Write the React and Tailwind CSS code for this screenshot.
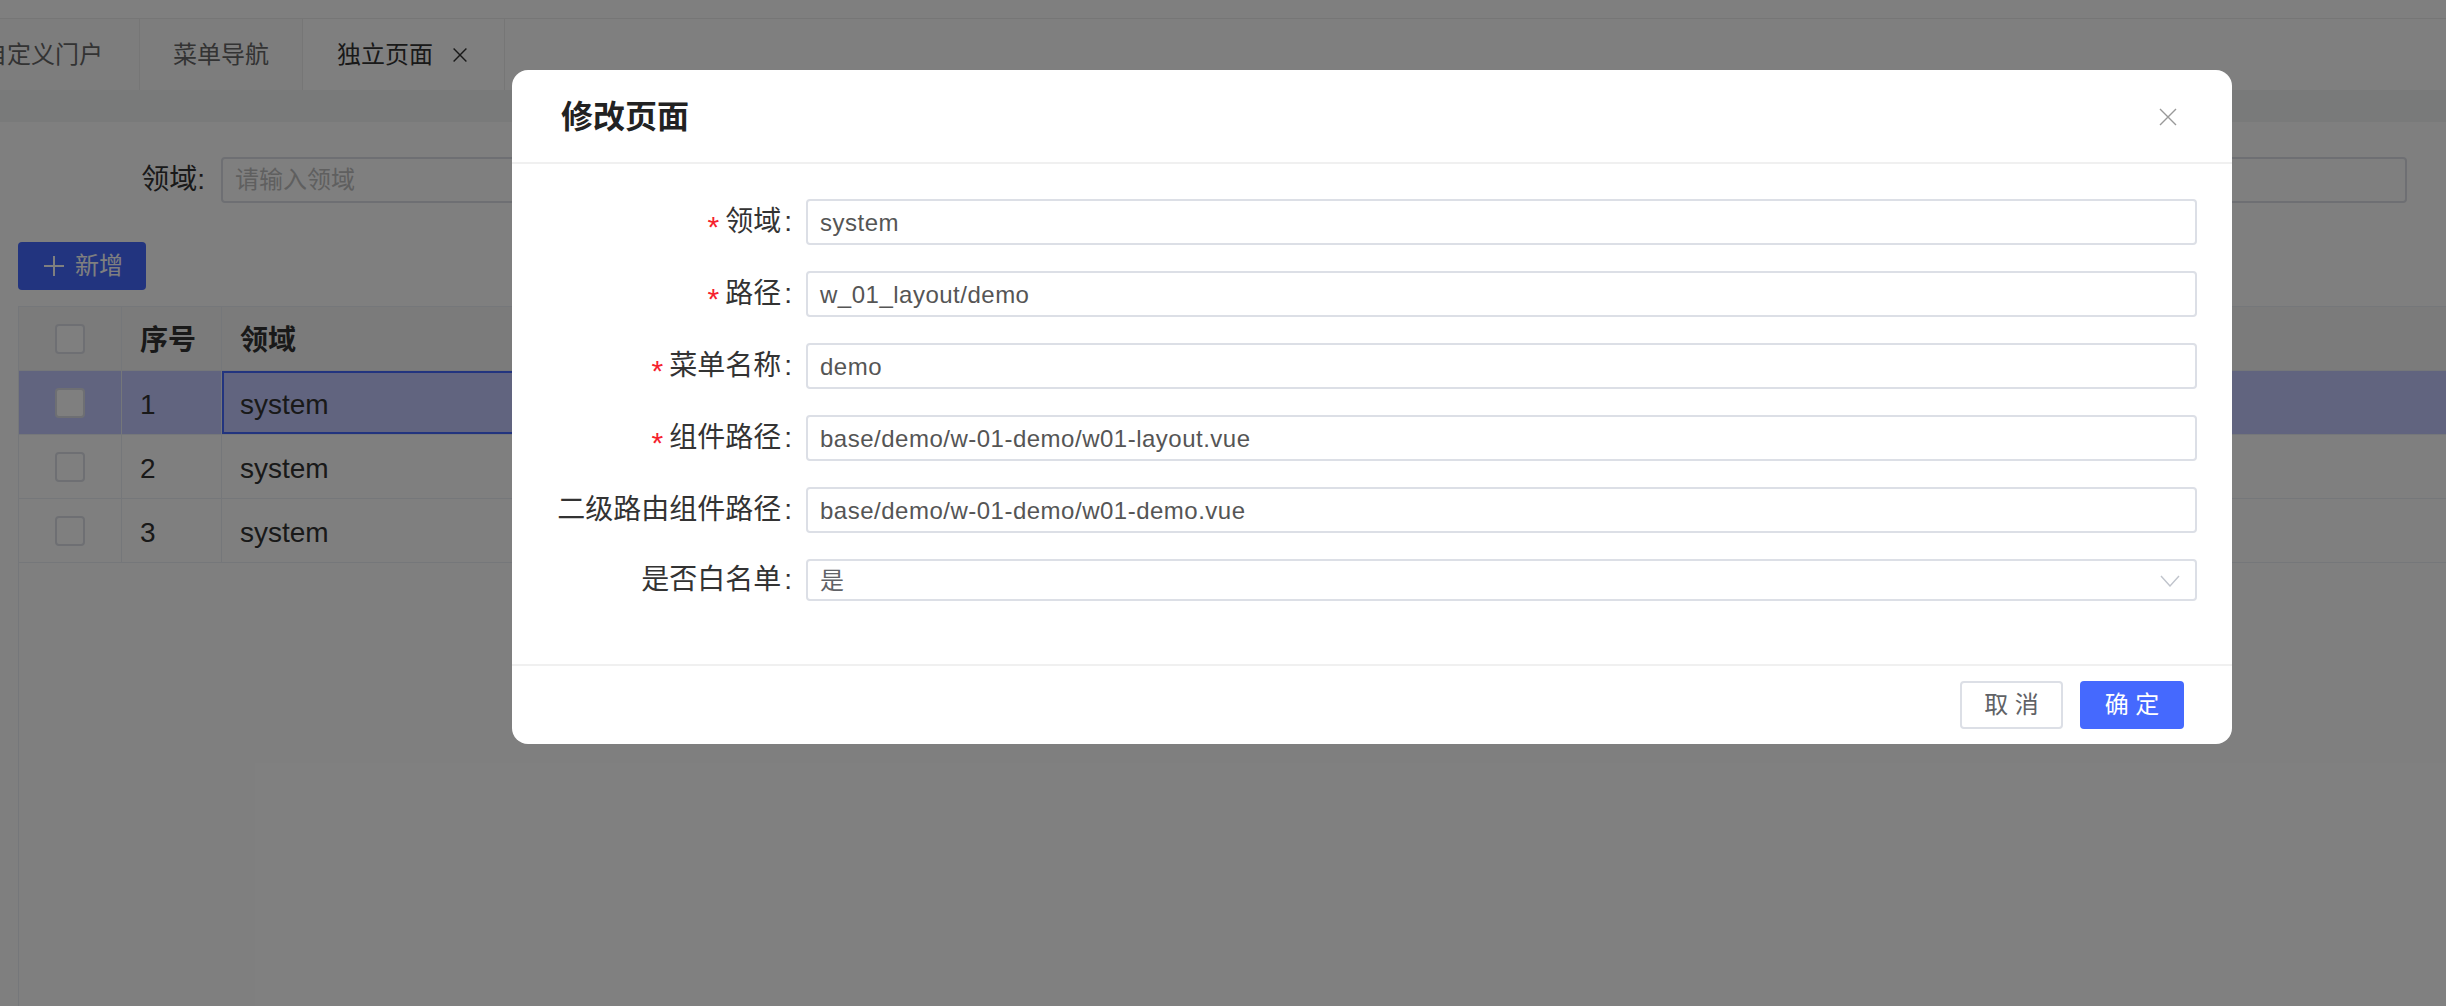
import React from 'react';

const rows = [
  { no: 1, domain: 'system', path: 'w_01_layout/demo', menu: 'demo', active: true },
  { no: 2, domain: 'system', path: 'w_01_layout/menu', menu: 'menu' },
  { no: 3, domain: 'system', path: 'w_01_layout/portal', menu: 'portal' },
];

const fields = [
  { label: '领域', value: 'system', required: true },
  { label: '路径', value: 'w_01_layout/demo', required: true },
  { label: '菜单名称', value: 'demo', required: true },
  { label: '组件路径', value: 'base/demo/w-01-demo/w01-layout.vue', required: true },
  { label: '二级路由组件路径', value: 'base/demo/w-01-demo/w01-demo.vue' },
];

const Checkbox = () => (
  <span className="block w-[30px] h-[30px] rounded-[4px] border-2 border-[#dcdfe6] bg-white" />
);

const CloseIcon = ({ size, color, width = 1.5 }) => (
  <svg width={size} height={size} viewBox="0 0 20 20" fill="none" stroke={color} strokeWidth={width}>
    <path d="M2 2 L18 18 M18 2 L2 18" />
  </svg>
);

const FormLabel = ({ label, required }) => (
  <div className="w-[236px] shrink-0 mr-[14px] flex items-center justify-end text-[28px] text-[#333] leading-none">
    {required && <span className="text-[#f5222d] text-[30px] mr-[6px] mt-[10px]">*</span>}
    <span>{label}</span>
    <span className="ml-[3px]">:</span>
  </div>
);

export default function App() {
  return (
    <div className="relative w-full h-[1006px] overflow-hidden bg-white font-[family-name:'Liberation_Sans','Noto_Sans_CJK_SC',sans-serif]">
      {/* page underneath */}
      <div className="flex flex-col h-full">
        <div className="h-[19px] shrink-0 border-b border-[#ececec]" />

        {/* tabs */}
        <div className="h-[71px] shrink-0 flex text-[24px]">
          <div className="-ml-[17px] pr-[36px] flex items-center bg-[#fafafa] border-r border-[#ececec] text-[#666]">
            自定义门户
          </div>
          <div className="px-[33px] flex items-center bg-[#fafafa] border-r border-[#ececec] text-[#666]">
            菜单导航
          </div>
          <div className="pl-[34px] pr-[36px] flex items-center gap-[19px] border-r border-[#ececec] text-[#333]">
            <span>独立页面</span>
            <CloseIcon size={16} color="#333" width={1.8} />
          </div>
        </div>
        <div className="h-[32px] shrink-0 bg-[#f3f4f5]" />

        {/* search */}
        <div className="mt-[35px] flex items-center mr-[39px]">
          <div className="w-[205px] text-right text-[28px] text-[#333]">领域:</div>
          <div className="ml-[16px] flex-1 h-[46px] rounded-[4px] border-2 border-[#dcdfe6] flex items-center pl-[12px] text-[24px] text-[#bfbfbf]">
            请输入领域
          </div>
        </div>

        <div className="mt-[39px] ml-[18px]">
          <button className="w-[128px] h-[48px] rounded-[4px] bg-[#4468fe] text-white text-[24px] flex items-center pl-[26px] gap-[11px]">
            <svg width="20" height="20" viewBox="0 0 20 20" stroke="white" strokeWidth="2">
              <path d="M10 0 V20 M0 10 H20" />
            </svg>
            新增
          </button>
        </div>

        {/* table */}
        <div className="mt-[16px] ml-[18px] flex-1 border-l border-[#ebeef5] text-[28px] text-[#333] overflow-hidden">
          <div className="flex h-[65px] bg-[#f6f6f6] border-y border-[#ebeef5] font-bold">
            <div className="w-[103px] shrink-0 flex items-center justify-center border-r border-[#ebeef5]">
              <Checkbox />
            </div>
            <div className="w-[100px] shrink-0 flex items-center pl-[18px] pt-[4px] border-r border-[#ebeef5]">序号</div>
            <div className="w-[880px] shrink-0 flex items-center pl-[18px] pt-[4px] border-r border-[#ebeef5]">领域</div>
            <div className="w-[700px] shrink-0 flex items-center pl-[18px] pt-[4px] border-r border-[#ebeef5]">路径</div>
            <div className="flex-1 flex items-center pl-[18px] pt-[4px]">菜单名称</div>
          </div>
          {rows.map((r) => (
            <div
              key={r.no}
              className={`flex h-[64px] border-b border-[#ebeef5] ${r.active ? 'bg-[#c2c9ff]' : 'bg-white'}`}
            >
              <div className="w-[103px] shrink-0 flex items-center justify-center border-r border-[#ebeef5]">
                <Checkbox />
              </div>
              <div className="w-[100px] shrink-0 flex items-center pl-[18px] pt-[4px] border-r border-[#ebeef5]">{r.no}</div>
              <div
                className={`w-[880px] shrink-0 flex items-center pt-[4px] ${
                  r.active ? 'border-2 border-[#4468fe] pl-[16px]' : 'pl-[18px] border-r border-[#ebeef5]'
                }`}
              >
                {r.domain}
              </div>
              <div className="w-[700px] shrink-0 flex items-center pl-[18px] pt-[4px] border-r border-[#ebeef5]">{r.path}</div>
              <div className="flex-1 flex items-center pl-[18px] pt-[4px]">{r.menu}</div>
            </div>
          ))}
        </div>
      </div>

      {/* mask */}
      <div className="absolute inset-0 bg-black/50" />

      {/* edit dialog */}
      <div className="absolute left-[512px] top-[70px] w-[1720px] rounded-[16px] bg-white">
        <div className="h-[94px] flex items-center justify-between pl-[49px] pr-[54px] pt-[2px] border-b-2 border-[#f0f0f0]">
          <h2 className="text-[32px] font-bold text-[#222]">修改页面</h2>
          <CloseIcon size={20} color="#999" width={1.4} />
        </div>

        <div className="pt-[35px] pb-[63px] pl-[44px] pr-[35px] flex flex-col gap-[26px]">
          {fields.map((f) => (
            <div key={f.label} className="flex items-center">
              <FormLabel label={f.label} required={f.required} />
              <div className="flex-1 h-[46px] rounded-[4px] border-2 border-[#dcdfe6] flex items-center pl-[12px] pt-[2px] text-[24px] tracking-[0.5px] text-[#555]">
                {f.value}
              </div>
            </div>
          ))}
          <div className="flex items-center">
            <FormLabel label="是否白名单" />
            <div className="flex-1 h-[42px] rounded-[4px] border-2 border-[#dcdfe6] flex items-center justify-between pl-[12px] pr-[15px] pt-[2px] text-[24px] text-[#606266]">
              <span>是</span>
              <svg width="20" height="12" viewBox="0 0 20 12" fill="none" stroke="#c0c4cc" strokeWidth="1.4">
                <path d="M1 1 L10 11 L19 1" />
              </svg>
            </div>
          </div>
        </div>

        <div className="h-[80px] border-t-2 border-[#f0f0f0] flex items-center justify-end gap-[17px] pr-[48px] text-[24px]">
          <button className="w-[103px] h-[48px] rounded-[4px] border-2 border-[#dcdfe6] bg-white text-[#606266]">
            取 消
          </button>
          <button className="w-[104px] h-[48px] rounded-[4px] bg-[#4569fe] text-white">确 定</button>
        </div>
      </div>
    </div>
  );
}
